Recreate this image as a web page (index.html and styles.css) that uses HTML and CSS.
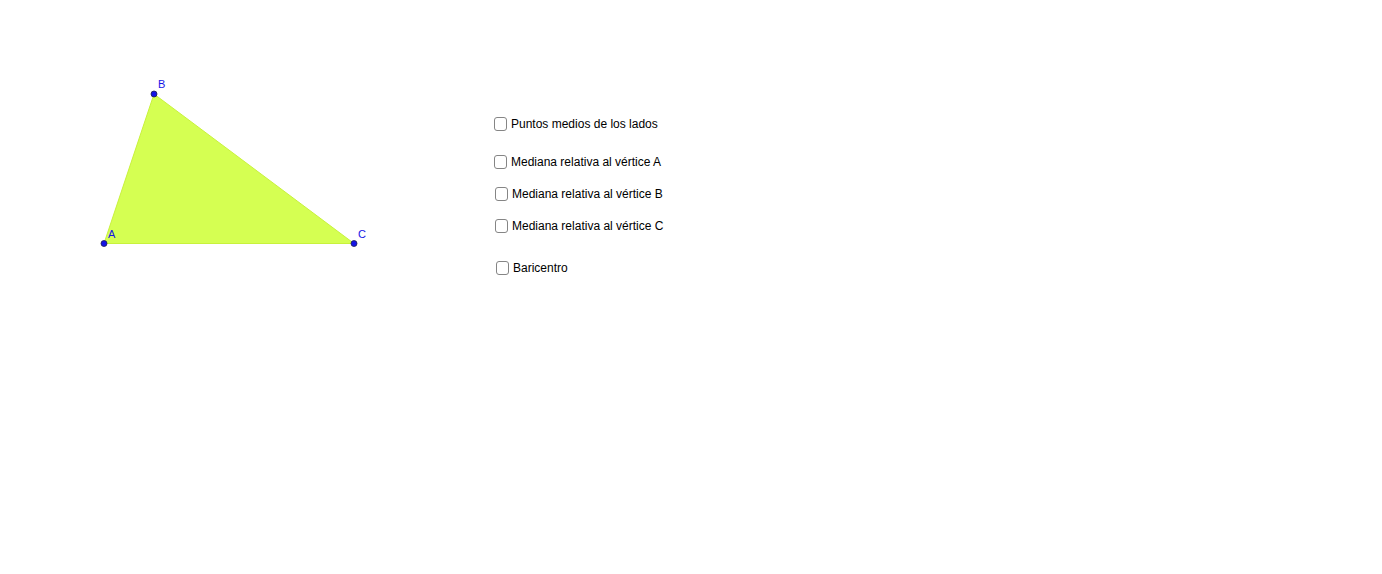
FILE: index.html
```html
<!DOCTYPE html>
<html lang="es">
<head>
<meta charset="utf-8">
<title>Baricentro</title>
<link rel="stylesheet" href="styles.css">
</head>
<body>
<div class="applet">
  <svg class="canvas" width="1382" height="574" viewBox="0 0 1382 574">
    <polygon points="104,243.5 154,94 354,243.5" fill="#d5ff52" stroke="#c8f23c" stroke-width="1"/>
    <g fill="#1414e6" stroke="#202050" stroke-width="0.8">
      <circle cx="104" cy="243.5" r="3"/>
      <circle cx="154" cy="94" r="3"/>
      <circle cx="354" cy="243.5" r="3"/>
    </g>
    <g class="lbl" fill="#1414e6">
      <text x="108" y="238">A</text>
      <text x="158" y="88">B</text>
      <text x="358" y="238">C</text>
    </g>
  </svg>
  <label class="cb cb1"><span class="box"></span>Puntos medios de los lados</label>
  <label class="cb cb2"><span class="box"></span>Mediana relativa al vértice A</label>
  <label class="cb cb3"><span class="box"></span>Mediana relativa al vértice B</label>
  <label class="cb cb4"><span class="box"></span>Mediana relativa al vértice C</label>
  <label class="cb cb5"><span class="box"></span>Baricentro</label>
</div>
</body>
</html>
```
FILE: styles.css
```css
html, body {
  margin: 0;
  padding: 0;
  background: #ffffff;
}
.applet {
  position: relative;
  width: 1382px;
  height: 574px;
  overflow: hidden;
  font-family: "Liberation Sans", Arial, sans-serif;
}
.canvas {
  position: absolute;
  left: 0;
  top: 0;
}
.lbl text {
  font-family: "Liberation Sans", Arial, sans-serif;
  font-size: 11px;
}
.cb {
  position: absolute;
  display: flex;
  align-items: center;
  gap: 4px;
  font-size: 12px;
  color: #000;
  line-height: 14px;
  white-space: nowrap;
}
.box {
  flex: none;
  width: 11px;
  height: 12px;
  border: 1px solid #858585;
  border-radius: 3px;
  background: #fff;
}
.cb1 { left: 494px; top: 117px; }
.cb2 { left: 494px; top: 155px; }
.cb3 { left: 495px; top: 187px; }
.cb4 { left: 495px; top: 219px; }
.cb5 { left: 496px; top: 261px; }
```
